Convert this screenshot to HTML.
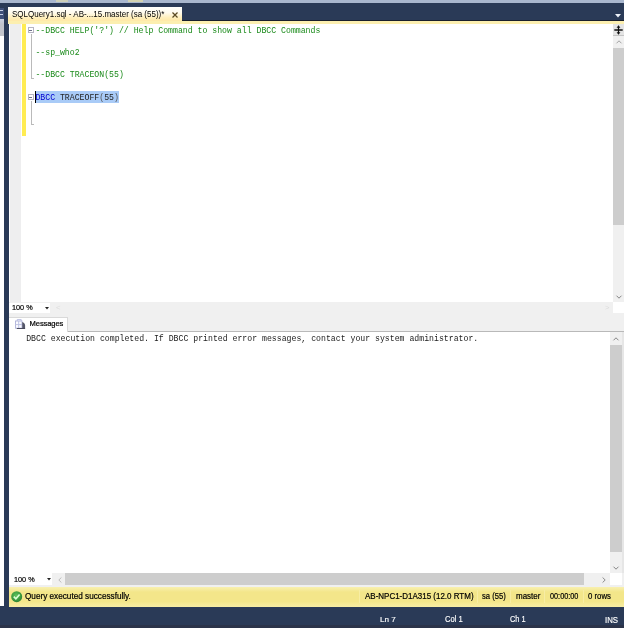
<!DOCTYPE html>
<html>
<head>
<meta charset="utf-8">
<title>SQLQuery1.sql</title>
<style>
html,body{margin:0;padding:0;}
body{width:624px;height:628px;overflow:hidden;background:#2a3a57;position:relative;font-family:"Liberation Sans",sans-serif;}
.abs{position:absolute;}
#topstrip{left:0;top:0;width:624px;height:3px;background:#a9b7ce;}
#leftpane{left:0;top:36px;width:4px;height:570px;background:#ffffff;}
#leftpane2{left:0;top:19px;width:4px;height:17px;background:linear-gradient(#ccd2e2,#c0c3cc 30%,#c4c6cc);}
#leftpane3{left:0;top:8px;width:4px;height:11px;background:#3f5079;}
#tab{left:8px;top:7.4px;width:174px;height:13.6px;background:linear-gradient(#fffffc 0%,#fffbee 40%,#ffefbc 75%,#ffe8a6 100%);}
#tabtxt{left:11.6px;top:9.4px;font-size:8.7px;line-height:10px;color:#000;transform-origin:0 0;transform:scaleX(0.92);white-space:nowrap;}
#tabline{left:8px;top:21px;width:616px;height:3px;background:#fcefb0;}
#editor{left:8.5px;top:24px;width:605.5px;height:278px;background:#fff;}
#margin{left:10.3px;top:24px;width:10.4px;height:278px;background:#eeeeef;}
#ybar{left:22px;top:24px;width:4px;height:112px;background:#ffec52;}
.code{font-family:"Liberation Mono",monospace;font-size:8.2px;line-height:11.2px;white-space:pre;}
#code{left:35.4px;top:24.5px;color:#1a8a1a;}
.sel{}
.fold{width:4px;height:3.6px;border:1px solid #b6b4c2;background:#fff;box-sizing:content-box;}
.fold i{position:absolute;left:0.75px;top:1.3px;width:2.5px;height:1px;background:#70708a;}
.vl{width:1px;background:#bababa;}
.hl{height:1px;background:#bababa;}
#vscroll1{left:613px;top:24px;width:11px;height:278px;background:#f0f0f0;}
#zoomrow1{left:8.5px;top:302px;width:615.5px;height:29px;background:#f0f0f0;}
#msgpane{left:8.5px;top:332px;width:601.5px;height:241px;background:#fff;}
#statusbar{left:8.5px;top:587.4px;width:615.5px;height:19.4px;background:linear-gradient(#f8f0b0,#f3e68a 25%,#f3e68a 72%,#f7eda4);}
.st{font-size:8.3px;line-height:10px;color:#000;white-space:nowrap;top:591.5px;-webkit-text-stroke:0.2px #000;}
.wt{font-size:8.3px;line-height:10px;color:#fff;white-space:nowrap;top:614.5px;-webkit-text-stroke:0.15px #fff;}
.ui{font-size:7.7px;line-height:10px;color:#000;white-space:nowrap;-webkit-text-stroke:0.2px #000;}
.thumb{background:#cdcdcd;}
.sep{top:590px;width:1px;height:13px;background:#f7eda4;}
svg{position:absolute;overflow:visible;}
</style>
</head>
<body>
<div id="root" style="position:absolute;left:0;top:0;width:624px;height:628px;will-change:transform;">
<div class="abs" id="topstrip"></div>
<div class="abs" style="left:56px;top:0;width:12px;height:2px;background:#cdcfb8;"></div>
<div class="abs" style="left:128px;top:0;width:15px;height:2px;background:#d3d2b0;"></div>
<div class="abs" id="leftpane3"></div>
<div class="abs" style="left:0;top:10px;width:3px;height:1px;background:#c9d2e6;"></div>
<div class="abs" style="left:0;top:14px;width:3px;height:1px;background:#c9d2e6;"></div>
<div class="abs" id="leftpane2"></div>
<div class="abs" id="leftpane"></div>

<!-- document tab -->
<div class="abs" id="tab"></div>
<div class="abs" id="tabtxt">SQLQuery1.sql - AB-...15.master (sa (55))*</div>
<svg style="left:172px;top:12px;" width="6" height="6" viewBox="0 0 6 6"><path d="M0.5 0.5 L5.5 5.5 M5.5 0.5 L0.5 5.5" stroke="#5a4a22" stroke-width="1.2" fill="none"/></svg>
<svg style="left:615px;top:13.8px;" width="6" height="4" viewBox="0 0 6 4"><path d="M0 0 H6 L3 3.4 Z" fill="#eef2f9"/></svg>
<div class="abs" id="tabline"></div>
<div class="abs" style="left:182px;top:20px;width:442px;height:1px;background:#1a1f2c;"></div>

<!-- editor -->
<div class="abs" id="editor"></div>
<div class="abs" id="margin"></div>
<div class="abs" id="ybar"></div>
<div class="abs vl" style="left:31px;top:34px;height:45px;"></div>
<div class="abs hl" style="left:31px;top:78px;width:3px;"></div>
<div class="abs fold" style="left:27.5px;top:27.4px;"><i></i></div>
<div class="abs vl" style="left:31px;top:101px;height:24px;"></div>
<div class="abs hl" style="left:31px;top:124px;width:3px;"></div>
<div class="abs fold" style="left:27.5px;top:94.4px;"><i></i></div>
<div class="abs" style="left:35.4px;top:91.2px;width:83.8px;height:11.4px;background:#a9cbf7;"></div>
<div class="abs code" id="code">--DBCC HELP('?') // Help Command to show all DBCC Commands

--sp_who2

--DBCC TRACEON(55)

<span class="sel"><span style="color:#0000d0">DBCC</span><span style="color:#222"> TRACEOFF</span><span style="color:#555">(</span><span style="color:#222">55</span><span style="color:#555">)</span></span>
</div>
<div class="abs" style="left:35px;top:91px;width:1px;height:12px;background:#000;"></div>

<!-- editor v-scroll -->
<div class="abs" id="vscroll1"></div>
<div class="abs" style="left:613px;top:24px;width:11px;height:12px;background:#e4e4e4;border-bottom:1px solid #c4c4c4;box-sizing:border-box;"></div>
<svg style="left:614px;top:25px;" width="9" height="10" viewBox="0 0 9 10"><path d="M4.5 0.3 L6.4 2.7 H5.1 V4.2 H8.7 V5.8 H5.1 V7.3 H6.4 L4.5 9.7 L2.6 7.3 H3.9 V5.8 H0.3 V4.2 H3.9 V2.7 H2.6 Z" fill="#111"/></svg>
<svg style="left:615.5px;top:39.5px;" width="6" height="4" viewBox="0 0 6 4"><path d="M0.5 3.3 L3 0.8 L5.5 3.3" stroke="#a2a2a2" stroke-width="1" fill="none"/></svg>
<div class="abs thumb" style="left:613px;top:48px;width:11px;height:177px;"></div>
<svg style="left:615.5px;top:294.5px;" width="6" height="4" viewBox="0 0 6 4"><path d="M0.5 0.7 L3 3.2 L5.5 0.7" stroke="#858585" stroke-width="1" fill="none"/></svg>

<!-- zoom row 1 + messages tab strip -->
<div class="abs" id="zoomrow1"></div>
<div class="abs" style="left:9px;top:303px;width:41px;height:9.5px;background:#fff;"></div>
<div class="abs ui" style="left:11.5px;top:303px;font-size:7.8px;transform-origin:0 50%;transform:scaleX(0.936);" id="z1">100 %</div>
<svg style="left:45px;top:307px;" width="4" height="3" viewBox="0 0 4 3"><path d="M0 0 H4 L2 2.5 Z" fill="#222"/></svg>
<div class="abs" style="left:613px;top:302px;width:11px;height:11px;background:#fff;"></div>
<div class="abs ui" style="left:56px;top:303px;color:#dcdcdc;-webkit-text-stroke:0;">&lt;</div>
<div class="abs ui" style="left:605px;top:303px;color:#dcdcdc;-webkit-text-stroke:0;">&gt;</div>
<div class="abs" style="left:8.5px;top:331px;width:615.5px;height:1px;background:#b9b9b9;"></div>
<div class="abs" style="left:8.5px;top:316.6px;width:59.5px;height:15.4px;background:#fff;border:1px solid #d9d9d9;border-bottom:none;border-left:none;box-sizing:border-box;"></div>
<svg style="left:14.5px;top:319px;" width="11" height="10" viewBox="0 0 11 10">
<path d="M2.2 2 V0.5 H6.2 V2" fill="#f6f7fd" stroke="#b3b7dd" stroke-width="0.8"/>
<rect x="0.5" y="2" width="6.5" height="7.2" fill="#fbfbff" stroke="#aeb2da" stroke-width="0.9"/>
<path d="M3.7 2 V9.2 M0.5 5.6 H7" stroke="#b9bde2" stroke-width="0.9" fill="none"/>
<path d="M7.2 3 C8.8 3.6 10.1 4.8 10.1 6.4 V9.4 H7.2 Z" fill="#55576a"/>
<path d="M1.8 9.5 H10.1" stroke="#3c3e50" stroke-width="0.9"/>
</svg>
<div class="abs ui" style="left:29.6px;top:319px;font-size:7.6px;letter-spacing:-0.12px;" id="msgtab">Messages</div>

<!-- messages pane -->
<div class="abs" id="msgpane"></div>
<div class="abs code" style="left:26.2px;top:332.5px;color:#222;" id="msg">DBCC execution completed. If DBCC printed error messages, contact your system administrator.</div>
<div class="abs" style="left:610px;top:332px;width:12px;height:241px;background:#f0f0f0;"></div>
<div class="abs" style="left:622px;top:332px;width:2px;height:255px;background:#e6e6e6;"></div>
<svg style="left:613px;top:336.5px;" width="6" height="4" viewBox="0 0 6 4"><path d="M0.5 3.3 L3 0.8 L5.5 3.3" stroke="#858585" stroke-width="1" fill="none"/></svg>
<div class="abs thumb" style="left:610px;top:344.5px;width:12px;height:207px;"></div>
<svg style="left:613px;top:565.5px;" width="6" height="4" viewBox="0 0 6 4"><path d="M0.5 0.7 L3 3.2 L5.5 0.7" stroke="#858585" stroke-width="1" fill="none"/></svg>

<!-- zoom row 2 / h-scroll -->
<div class="abs" style="left:8.5px;top:573px;width:615.5px;height:14px;background:#f0f0f0;"></div>
<div class="abs" style="left:9px;top:573px;width:43px;height:12px;background:#fff;"></div>
<div class="abs ui" style="left:13.5px;top:574.5px;font-size:7.8px;transform-origin:0 50%;transform:scaleX(0.936);" id="z2">100 %</div>
<svg style="left:47.3px;top:578px;" width="4" height="3" viewBox="0 0 4 3"><path d="M0 0 H4 L2 2.5 Z" fill="#222"/></svg>
<svg style="left:57.5px;top:576.5px;" width="4" height="6" viewBox="0 0 4 6"><path d="M3.4 0.5 L0.8 3 L3.4 5.5" stroke="#bdbdbd" stroke-width="1" fill="none"/></svg>
<div class="abs thumb" style="left:65px;top:573px;width:519px;height:12px;"></div>
<svg style="left:602px;top:576.5px;" width="4" height="6" viewBox="0 0 4 6"><path d="M0.6 0.5 L3.2 3 L0.6 5.5" stroke="#8c8c8c" stroke-width="1" fill="none"/></svg>
<div class="abs" style="left:610px;top:573px;width:12px;height:12px;background:#fff;"></div>

<!-- status bar -->
<div class="abs" id="statusbar"></div>
<svg style="left:10.5px;top:591.1px;" width="11.4" height="11.4" viewBox="0 0 11 11">
<defs><radialGradient id="g" cx="0.45" cy="0.4" r="0.65"><stop offset="0" stop-color="#62c45e"/><stop offset="0.6" stop-color="#3d9e40"/><stop offset="1" stop-color="#2a7c30"/></radialGradient></defs>
<circle cx="5.5" cy="5.5" r="5.3" fill="url(#g)"/>
<path d="M2.7 5.5 L4.7 7.6 L8.3 3.3" stroke="#dcffd6" stroke-width="1.6" fill="none"/>
</svg>
<div class="abs st" style="left:25px;font-size:8.2px;" id="s0">Query executed successfully.</div>
<div class="abs sep" style="left:359px;"></div>
<div class="abs st" style="left:364.5px;font-size:8.2px;transform-origin:0 50%;transform:scaleX(0.975);" id="s1">AB-NPC1-D1A315 (12.0 RTM)</div>
<div class="abs sep" style="left:477px;"></div>
<div class="abs st" style="left:482px;font-size:8.2px;transform-origin:0 50%;transform:scaleX(0.933);" id="s2">sa (55)</div>
<div class="abs sep" style="left:510px;"></div>
<div class="abs st" style="left:515.5px;font-size:8.2px;transform-origin:0 50%;transform:scaleX(0.976);" id="s3">master</div>
<div class="abs sep" style="left:544px;"></div>
<div class="abs st" style="left:549.5px;font-size:8.2px;transform-origin:0 50%;transform:scaleX(0.890);" id="s4">00:00:00</div>
<div class="abs sep" style="left:583px;"></div>
<div class="abs st" style="left:588px;font-size:8.2px;transform-origin:0 50%;transform:scaleX(0.951);" id="s5">0 rows</div>

<!-- app status bar -->
<div class="abs" style="left:0;top:625px;width:624px;height:3px;background:#2b3349;"></div>
<div class="abs wt" style="left:380px;font-size:8.1px;" id="w1">Ln 7</div>
<div class="abs wt" style="left:444.8px;font-size:8.2px;transform-origin:0 50%;transform:scaleX(0.927);" id="w2">Col 1</div>
<div class="abs wt" style="left:509.8px;font-size:8.2px;transform-origin:0 50%;transform:scaleX(0.902);" id="w3">Ch 1</div>
<div class="abs wt" style="left:605px;font-size:8.7px;transform-origin:0 50%;transform:scaleX(0.9);" id="w4">INS</div>
</div>
</body>
</html>
